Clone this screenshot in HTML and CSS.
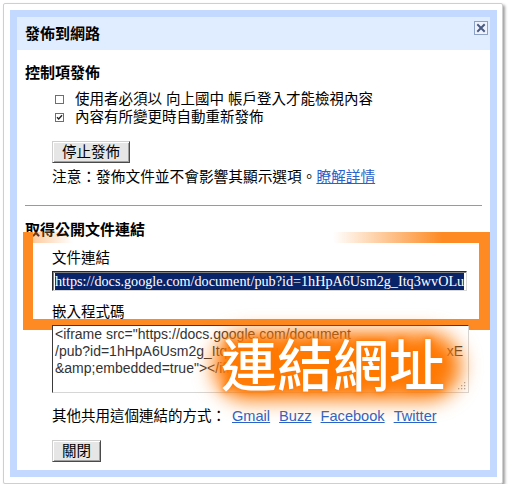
FILE: index.html
```html
<!DOCTYPE html>
<html lang="zh-Hant">
<head>
<meta charset="utf-8">
<title>發佈到網路</title>
<link rel="stylesheet" href="styles.css">
</head>
<body>
<div class="frame">
  <div class="dialog">
    <div class="titlebar">
      <span class="title">發佈到網路</span>
      <span class="close">
        <svg width="14" height="14" viewBox="0 0 14 14"><rect x="0.5" y="0.5" width="13" height="13" fill="#eef3fd" stroke="#8ea2c6"/><path d="M4 4 L10 10 M10 4 L4 10" stroke="#4a5b82" stroke-width="2" stroke-linecap="square"/></svg>
      </span>
    </div>
    <div class="content">
      <h2 class="heading">控制項發佈</h2>
      <div class="opts">
        <div class="opt">
          <svg class="cb" width="9" height="9" viewBox="0 0 9 9"><rect x="0.5" y="0.5" width="8" height="8" fill="#fff" stroke="#6e6e6e"/></svg>
          <span>使用者必須以 向上國中 帳戶登入才能檢視內容</span>
        </div>
        <div class="opt">
          <svg class="cb" width="9" height="9" viewBox="0 0 9 9"><rect x="0.5" y="0.5" width="8" height="8" fill="#fff" stroke="#6e6e6e"/><path d="M2 4.2 L3.7 6 L7 2.3" fill="none" stroke="#222" stroke-width="1.4"/></svg>
          <span>內容有所變更時自動重新發佈</span>
        </div>
      </div>
      <button class="btn btn-stop">停止發佈</button>
      <p class="note">注意：發佈文件並不會影響其顯示選項。<a class="link" href="#">瞭解詳情</a></p>
      <div class="rule"></div>
      <h2 class="heading heading-2">取得公開文件連結</h2>
      <div class="sub">
        <div class="label">文件連結</div>
        <div class="field"><span class="sel">https://docs.google.com/document/pub?id=1hHpA6Usm2g_Itq3wvOLu</span></div>
        <div class="label label-2">嵌入程式碼</div>
        <div class="code">
          <div class="code-line">&lt;iframe src="https://docs.google.com/document</div>
          <div class="code-line split"><span>/pub?id=1hHpA6Usm2g_Itq3wvOLu</span><span>xE</span></div>
          <div class="code-line">&amp;amp;embedded=true"&gt;&lt;/iframe&gt;</div>
          <svg class="grip" width="8" height="8" viewBox="0 0 8 8"><g fill="#a8a8a8"><rect x="6" y="0" width="1.3" height="1.3"/><rect x="3" y="3" width="1.3" height="1.3"/><rect x="6" y="3" width="1.3" height="1.3"/><rect x="0" y="6" width="1.3" height="1.3"/><rect x="3" y="6" width="1.3" height="1.3"/><rect x="6" y="6" width="1.3" height="1.3"/></g></svg>
        </div>
        <div class="share">其他共用這個連結的方式：<a class="link first" href="#">Gmail</a><a class="link" href="#">Buzz</a><a class="link" href="#">Facebook</a><a class="link" href="#">Twitter</a></div>
        <button class="btn btn-close">關閉</button>
      </div>
    </div>
    <div class="hl"></div>
    <div class="glow"></div>
    <div class="stamp">連結網址</div>
  </div>
</div>
</body>
</html>
```
FILE: styles.css
```css
html, body {
  margin: 0;
  padding: 0;
  background: #fff;
}
body {
  font-family: "Liberation Sans", "Noto Sans CJK TC", sans-serif;
  color: #000;
}
.frame {
  margin: 3px 0 0 3px;
  width: 500px;
  height: 481px;
  box-sizing: border-box;
  border: 1px solid #cfcfcf;
  border-radius: 2px;
  background: #fff;
  box-shadow: 2px 2px 3px rgba(0, 0, 0, 0.38);
  padding: 6px 5px 6px 6px;
}
.dialog {
  position: relative;
  width: 487px;
  height: 467px;
  box-sizing: border-box;
  border: 7px solid #c3d9ff;
  background: #fff;
}
.titlebar {
  height: 33px;
  background: #e0ecff;
  display: flex;
  align-items: center;
  padding-left: 8px;
}
.title {
  font-size: 15px;
  font-weight: bold;
  line-height: 20px;
}
.close {
  margin-left: auto;
  align-self: flex-start;
  margin-top: 4px;
  margin-right: 2px;
  width: 14px;
  height: 14px;
  display: block;
}
.close svg { display: block; }
.content {
  padding: 13px 8px 0 8px;
  font-size: 14.5px;
}
.heading {
  margin: 0;
  font-size: 15px;
  font-weight: bold;
  line-height: 20px;
}
.opts {
  margin-top: 7px;
  padding-left: 30px;
}
.opt {
  display: flex;
  align-items: center;
  height: 18px;
  line-height: 18px;
}
.cb {
  display: block;
  margin-right: 11px;
  flex: none;
}
.btn {
  display: block;
  height: 22px;
  padding: 0 9px;
  font-family: "Liberation Sans", "Noto Sans CJK TC", sans-serif;
  font-size: 14.5px;
  line-height: 20px;
  color: #000;
  background: #e6e6e6;
  border: 1px solid;
  border-color: #cfcfcf #4a4a4a #4a4a4a #cfcfcf;
  box-shadow: inset 1px 1px 0 #fff, inset -1px -1px 0 #a0a0a0;
  margin-left: 27px;
  cursor: pointer;
}
.btn-stop { margin-top: 15px; }
.note {
  margin: 5px 0 0 0;
  padding-left: 27px;
  line-height: 18px;
  font-size: 14.7px;
}
.link {
  color: #2a62c9;
  text-decoration: underline;
}
.rule {
  margin-top: 19px;
  border-top: 1px solid #9a9a9a;
  height: 0;
}
.heading-2 { margin-top: 14px; }
.sub { padding-left: 27px; }
.label {
  margin-top: 9px;
  line-height: 18px;
}
.label-2 { margin-top: 12px; }
.field {
  margin-top: 4px;
  width: 415px;
  height: 20px;
  box-sizing: border-box;
  border: 1px solid;
  border-color: #2b2b2b #d8d8d8 #d8d8d8 #2b2b2b;
  box-shadow: inset 1px 1px 0 #808080;
  padding: 1px 0 0 2px;
  overflow: hidden;
  white-space: nowrap;
  background: #fff;
}
.sel {
  display: inline-block;
  background: #0a246a;
  color: #fff;
  font-family: "Liberation Serif", serif;
  font-size: 14.2px;
  line-height: 17px;
  vertical-align: top;
}
.code {
  position: relative;
  z-index: 2;
  margin-top: 4px;
  width: 417px;
  height: 68px;
  box-sizing: border-box;
  border: 1px solid;
  border-color: #3a3a3a #d6d6d6 #d6d6d6 #3a3a3a;
  padding: 0 5px 0 2px;
  background: #fff;
  font-family: "Liberation Sans", sans-serif;
  font-size: 14px;
  line-height: 17px;
  color: #333;
}
.code-line { white-space: nowrap; }
.split {
  display: flex;
  justify-content: space-between;
}
.grip {
  position: absolute;
  right: 2px;
  bottom: 2px;
}
.share {
  margin-top: 14px;
  line-height: 18px;
}
.share .link {
  font-size: 14.6px;
  margin-left: 9px;
}
.share .link.first { margin-left: 6px; }
.btn-close { margin-left: 0; margin-top: 15px; }

/* annotation overlays */
.hl {
  position: absolute;
  z-index: 1;
  left: 6px;
  top: 215px;
  width: 467px;
  height: 98px;
  background:
    linear-gradient(to right, rgba(253, 138, 34, 0.55) 0px, rgba(253, 138, 34, 0) 50px, rgba(253, 138, 34, 0) 310px, #fd8a22 420px) top left / 100% 11px no-repeat,
    linear-gradient(#fd8a22, #fd8a22) left top / 10px 100% no-repeat,
    linear-gradient(#fd8a22, #fd8a22) right top / 11px 100% no-repeat,
    linear-gradient(#fd8a22, #fd8a22) left bottom / 100% 11px no-repeat;
}
.glow {
  position: absolute;
  z-index: 3;
  left: 196px;
  top: 315px;
  width: 248px;
  height: 68px;
  border-radius: 34px;
  background: #ff7a05;
  filter: blur(10px);
}
.stamp {
  position: absolute;
  z-index: 4;
  left: 204px;
  top: 317px;
  font-family: "Noto Sans CJK TC", sans-serif;
  font-weight: 500;
  font-size: 56px;
  line-height: 1;
  color: #fff;
  white-space: nowrap;
  text-shadow: 0 0 4px #ff7a00, 0 0 8px #ff7a00;
}
```
